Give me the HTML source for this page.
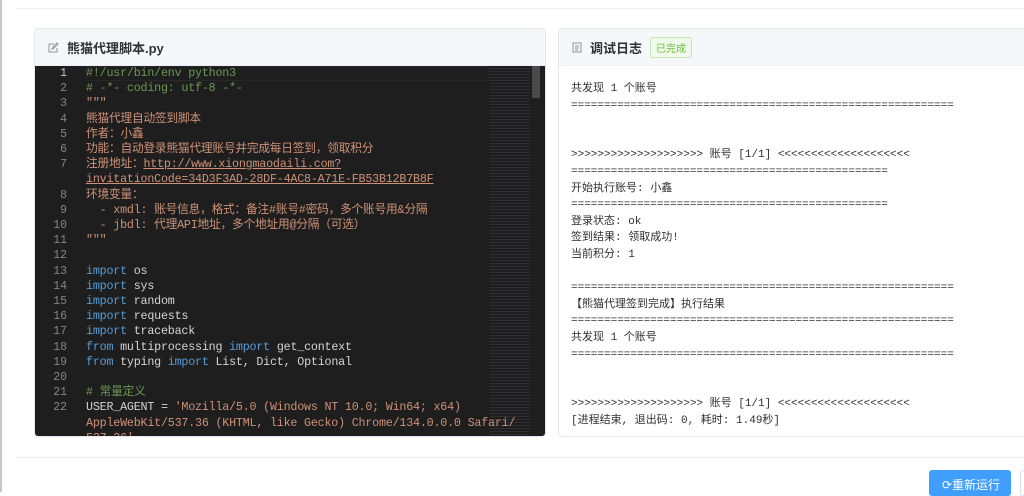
<!DOCTYPE html>
<html><head><meta charset="utf-8"><style>
*{margin:0;padding:0;box-sizing:border-box}
body{width:1024px;height:492px;overflow:hidden;background:#fff;font-family:"Liberation Sans","Noto Sans CJK SC",sans-serif;position:relative}
.topline{position:absolute;left:16px;right:0;top:8px;border-top:1px solid #ebeef5}
.leftbar{position:absolute;left:0;top:0;width:2px;height:492px;background:#c8c8c8}
.card{position:absolute;top:28px;height:409px;border:1px solid #e4e7ed;border-radius:4px;overflow:hidden;background:#fff}
.hd{height:37px;background:#f5f7fa;border-bottom:1px solid #ebeef5;display:flex;align-items:center;padding-left:13px;font-size:13px;font-weight:bold;color:#303133}
.code{position:absolute;top:37px;left:0;right:0;bottom:0;background:#1e1e1e;font-family:"Liberation Mono","Noto Sans CJK SC",monospace;font-size:11.7px;letter-spacing:-0.2px;line-height:15.2px}
.ln{position:absolute;left:0;width:32px;text-align:right;color:#858585;font-size:11.5px;letter-spacing:0}
.cl{position:absolute;left:51px;white-space:pre;color:#d4d4d4}
.c{color:#6a9955}.s{color:#ce9178}.k{color:#569cd6}
.log{position:absolute;left:12px;top:52px;font-family:"Liberation Mono","Noto Sans CJK SC",monospace;font-size:11px;color:#303133;line-height:16.6px;white-space:pre}
.tag{margin-left:8px;border:1px solid #c2e7b0;background:#f0f9eb;color:#67c23a;font-size:10px;font-weight:normal;padding:2px 5px;border-radius:3px}
</style></head><body>
<div class="leftbar"></div>
<div class="topline"></div>
<div class="card" style="left:34px;width:512px">
 <div class="hd"><svg width="11" height="11" viewBox="0 0 11 11" style="margin-right:8px"><path d="M1 2h5M1 2v8h8V6M4 7l1-2 4-4 1 1-4 4z" fill="none" stroke="#909399" stroke-width="1"/></svg>熊猫代理脚本.py</div>
 <div class="code">
  <div style="position:absolute;left:51px;top:0;width:404px;height:15px;border:1px solid #282828"></div>
  <div style="position:absolute;left:455px;top:0;width:40px;height:372px;opacity:.25;background:repeating-linear-gradient(#1e1e1e 0 2px,#667 2px 3px);"></div>
  <div style="position:absolute;right:5px;top:0;width:8px;height:32px;background:#4a4a4a"></div>
  <div id="lines"></div>
 </div>
</div>
<div class="card" style="left:558px;width:480px">
 <div class="hd"><svg width="10" height="11" viewBox="0 0 10 11" style="margin-right:8px"><rect x="1" y="1" width="8" height="9" fill="none" stroke="#909399"/><path d="M3 4h4M3 6h4M3 8h3" stroke="#909399"/></svg>调试日志<span class="tag">已完成</span></div>
 <div class="log">共发现 1 个账号
==========================================================


>>>>>>>>>>>>>>>>>>>> 账号 [1/1] <<<<<<<<<<<<<<<<<<<<
================================================
开始执行账号: 小鑫
================================================
登录状态: ok
签到结果: 领取成功!
当前积分: 1

==========================================================
【熊猫代理签到完成】执行结果
==========================================================
共发现 1 个账号
==========================================================


>>>>>>>>>>>>>>>>>>>> 账号 [1/1] <<<<<<<<<<<<<<<<<<<<
[进程结束, 退出码: 0, 耗时: 1.49秒]</div>
</div>
<div style="position:absolute;left:16px;right:0;top:457px;border-top:1px solid #ebeef5"></div>
<div style="position:absolute;left:929px;top:470px;width:82px;height:26px;background:#409eff;border-radius:3px;color:#fff;font-size:12px;padding:6px 0 0 13px">⟳重新运行</div>
<div style="position:absolute;left:1020px;top:470px;width:10px;height:26px;border:1px solid #dcdfe6;border-radius:3px"></div>
<script>
var L=[[1,'<span class="c">#!/usr/bin/env python3</span>'],[2,'<span class="c"># -*- coding: utf-8 -*-</span>'],[3,'<span class="s">"""</span>'],[4,'<span class="s">熊猫代理自动签到脚本</span>'],[5,'<span class="s">作者：小鑫</span>'],[6,'<span class="s">功能：自动登录熊猫代理账号并完成每日签到，领取积分</span>'],[7,'<span class="s">注册地址：<u>http://www.xiongmaodaili.com?</u></span>'],['','<span class="s"><u>invitationCode=34D3F3AD-28DF-4AC8-A71E-FB53B12B7B8F</u></span>'],[8,'<span class="s">环境变量：</span>'],[9,'<span class="s">  - xmdl: 账号信息，格式：备注#账号#密码，多个账号用&amp;分隔</span>'],[10,'<span class="s">  - jbdl: 代理API地址，多个地址用@分隔（可选）</span>'],[11,'<span class="s">"""</span>'],[12,''],[13,'<span class="k">import</span> os'],[14,'<span class="k">import</span> sys'],[15,'<span class="k">import</span> random'],[16,'<span class="k">import</span> requests'],[17,'<span class="k">import</span> traceback'],[18,'<span class="k">from</span> multiprocessing <span class="k">import</span> get_context'],[19,'<span class="k">from</span> typing <span class="k">import</span> List, Dict, Optional'],[20,''],[21,'<span class="c"># 常量定义</span>'],[22,'USER_AGENT = <span class="s">\'Mozilla/5.0 (Windows NT 10.0; Win64; x64)</span>'],['','<span class="s">AppleWebKit/537.36 (KHTML, like Gecko) Chrome/134.0.0.0 Safari/</span>'],['','<span class="s">537.36\'</span>']];
var h='';L.forEach(function(l,i){var t=i*15.2;h+='<div class="ln" style="top:'+t+'px'+(l[0]==1?';color:#c6c6c6':'')+'">'+l[0]+'</div><div class="cl" style="top:'+t+'px">'+l[1]+'</div>';});
document.getElementById('lines').innerHTML=h;
</script>
</body></html>
